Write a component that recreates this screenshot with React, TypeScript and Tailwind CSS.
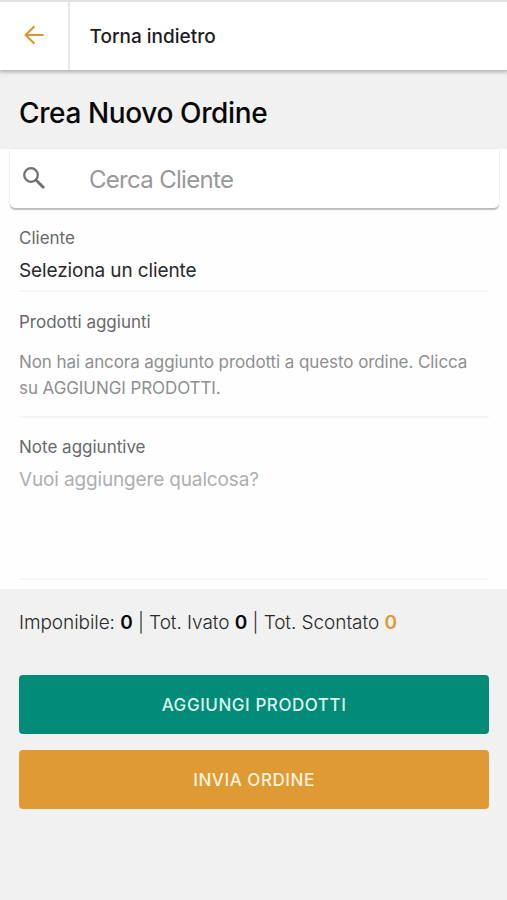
import React from "react";

function Field({ label, className, children }: { label: string; className: string; children: React.ReactNode }) {
  return (
    <section className={`mr-[18px] ml-[19px] border-b-2 border-[#f6f6f6] ${className}`}>
      <h2 className="text-[17px] leading-6 text-[#69696b]">{label}</h2>
      {children}
    </section>
  );
}

export default function App() {
  return (
    <div className="flex h-[900px] w-[507px] flex-col overflow-hidden bg-[#f1f1f1] font-['Inter','Liberation_Sans',sans-serif] whitespace-nowrap">
      <header className="z-10 flex h-[70px] shrink-0 border-t-2 border-[#e2e2e2] bg-white shadow-[0_1px_4px_1px_rgba(0,0,0,0.28)]">
        <button aria-label="Indietro" className="flex w-[70px] items-center justify-center border-r-2 border-[#e9e9e9]">
          <svg className="h-5 w-5 -translate-y-px" viewBox="0 0 20 20" fill="none" stroke="#dc962f" strokeWidth="2.1">
            <path d="M19.7 10H1.7M10.4 1.2L1.6 10l8.8 8.8" />
          </svg>
        </button>
        <div className="flex items-center pt-[3px] pl-[19.5px] text-[19px] font-medium text-[#1d1d1f]">
          <span>Torna indietro</span>
        </div>
      </header>

      <div className="flex h-[79px] shrink-0 items-center pt-[6px] pl-[19px] text-[28px] font-medium tracking-[-0.38px] text-[#080808]">
        <h1>Crea Nuovo Ordine</h1>
      </div>

      <main className="h-[440px] shrink-0 bg-[#fefefe]">
        <div className="mr-[8px] ml-[10px] flex h-[59px] items-center rounded-b-[5px] bg-white shadow-[0_1.5px_1px_rgba(0,0,0,0.24),0_0_2px_rgba(0,0,0,0.12)]">
          <svg className="ml-[13px] h-[22px] w-[22px] -translate-y-px" viewBox="0 0 22 22" fill="none" stroke="#707072" strokeWidth="2.3">
            <circle cx="8" cy="8" r="6.8" />
            <path d="M13 13l8 8" strokeWidth="2.9" />
          </svg>
          <span className="ml-[44px] pt-[3px] text-[24px] tracking-[-0.7px] text-[#99999b]">Cerca Cliente</span>
        </div>

        <Field label="Cliente" className="h-[84px] pt-[18px]">
          <p className="mt-[7px] text-[19px] leading-7 tracking-[-0.11px] text-[#29292b]">Seleziona un cliente</p>
        </Field>
        <Field label="Prodotti aggiunti" className="h-[126px] pt-[18px]">
          <p className="mt-[16px] text-[17px] leading-[25.5px] tracking-[-0.08px] text-[#8f8f91]">
            Non hai ancora aggiunto prodotti a questo ordine. Clicca
            <br />
            su AGGIUNGI PRODOTTI.
          </p>
        </Field>
        <Field label="Note aggiuntive" className="h-[162px] pt-[17px]">
          <p className="mt-[7px] text-[19px] leading-7 tracking-[-0.15px] text-[#afafb1]">Vuoi aggiungere qualcosa?</p>
        </Field>
      </main>

      <footer className="pr-[18px] pl-[19px]">
        <div className="mt-[21px] h-[26px] text-[19px] leading-[26px] font-light tracking-[-0.06px] text-[#29292b]">
          <p>
            Imponibile: <b className="font-semibold text-[#080808]">0</b> | Tot. Ivato{" "}
            <b className="font-semibold text-[#080808]">0</b> | Tot. Scontato{" "}
            <span className="font-semibold text-[#e09a33]">0</span>
          </p>
        </div>
        <button className="mt-[39px] flex h-[59px] w-full items-center justify-center rounded-[4px] bg-[#028b79] pt-[2px] text-[17px] font-medium tracking-[0.55px] text-[#dcf5ef]">
          AGGIUNGI PRODOTTI
        </button>
        <button className="mt-[16px] flex h-[59px] w-full items-center justify-center rounded-[4px] bg-[#e09a33] pt-[2px] text-[17px] font-medium tracking-[0.55px] text-[#fff3df]">
          INVIA ORDINE
        </button>
      </footer>
    </div>
  );
}
